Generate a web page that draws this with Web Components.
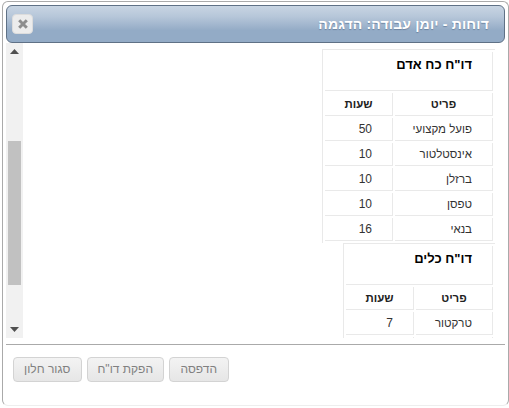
<!DOCTYPE html>
<html lang="he" dir="rtl"><head><meta charset="utf-8"><style>
html,body{margin:0;padding:0;background:#fff;height:408px;overflow:hidden}
body{font-family:"Liberation Sans",Arial,sans-serif;font-size:12px}
</style></head><body>
<app-dialog heading="דוחות - יומן עבודה: הדגמה">
  <report-table heading='דו"ח כח אדם' width="173" col="98" rows='[["פועל מקצועי","50"],["אינסטלטור","10"],["ברזלן","10"],["טפסן","10"],["בנאי","16"]]'></report-table>
  <report-table heading='דו"ח כלים' width="152" col="77" rows='[["טרקטור","7"],["",""]]'></report-table>
  <dlg-button slot="actions" w="59.5">הדפסה</dlg-button>
  <dlg-button slot="actions" w="77.5">הפקת דו"ח</dlg-button>
  <dlg-button slot="actions" w="68.5">סגור חלון</dlg-button>
</app-dialog>
<script>
class AppDialog extends HTMLElement{
  constructor(){super();const h=this.getAttribute('heading');
  this.attachShadow({mode:'open'}).innerHTML=`<style>
  :host{display:block;box-sizing:border-box;width:507px;height:405px;margin:1px 0 0 2px;background:#fff;border:1px solid #aaa;border-bottom-color:#eee;border-radius:6px;padding:3px 3px 0 3px;direction:rtl}
  .bar{box-sizing:border-box;height:38px;display:flex;align-items:center;justify-content:space-between;padding:0 15px 0 5px;border:1px solid #5f7186;border-radius:6px;background:linear-gradient(#c8d5e3 0%,#b6c6d9 30%,#93abc6 68%,#93abc6 100%)}
  h1{margin:0;font:bold 14px "Liberation Sans",Arial,sans-serif;letter-spacing:.17px;color:#fff;text-shadow:0 1px 1px #6d84a0}
  .x{box-sizing:border-box;width:21px;height:20px;border:1px solid #dcdcdc;border-radius:4px;background:#ececec;display:flex;align-items:center;justify-content:center}
  .body{display:flex;direction:ltr;height:295px}
  .sb{box-sizing:border-box;width:17px;flex:none;background:#f1f1f1;display:flex;flex-direction:column;align-items:center;justify-content:space-between;position:relative;padding:6px 0}
  .thumb{position:absolute;left:2px;top:98px;width:13px;height:144px;background:#c1c1c1}
  .content{flex:1;overflow:hidden;direction:rtl;padding:6px 10px 0 0}
  hr{margin:6px 0 0 0;border:0;height:1px;background:#aaa}
  .foot{display:flex;flex-direction:row-reverse;justify-content:flex-end;gap:5px;padding:12px 0 0 7px;direction:ltr}
  </style>
  <div class="bar"><h1>${h}</h1><div class="x"><svg width="12" height="12" viewBox="0 0 12 12"><path d="M2.2 2.2 9.8 9.8M9.8 2.2 2.2 9.8" stroke="#8d8d8d" stroke-width="3"/></svg></div></div>
  <div class="body"><div class="sb"><svg width="9" height="5"><path d="M0 5 4.5 0 9 5z" fill="#505050"/></svg><div class="thumb"></div><svg width="9" height="5"><path d="M0 0 4.5 5 9 0z" fill="#505050"/></svg></div><div class="content"><slot></slot></div></div>
  <hr><div class="foot"><slot name="actions"></slot></div>`;}
}
class ReportTable extends HTMLElement{
  constructor(){super();const w=+this.getAttribute('width'),col=+this.getAttribute('col');
  const rows=JSON.parse(this.getAttribute('rows'));
  this.attachShadow({mode:'open'}).innerHTML=`<style>
  :host{display:block;width:${w}px}
  table{box-sizing:border-box;width:${w}px;table-layout:fixed;border-collapse:separate;border-spacing:2px;border:solid #e9e9e9;border-width:1px 0 0 1px;color:#333;font:11.5px "Liberation Sans",Arial,sans-serif}
  td,th{border:solid #e9e9e9;border-width:0 1px 1px 0;padding:0;height:23px;box-sizing:border-box}
  .cap{height:39px;text-align:right;vertical-align:top;padding:5px 20px 0 0;font-size:13px;color:#000}
  .h{text-align:center;font-size:11.5px;font-weight:bold;color:#222}
  td{text-align:right;padding-right:20px}
  td.n{font-size:12px}
  </style><table><colgroup><col style="width:${col}px"><col></colgroup>
  <tr><th class="cap" colspan="2">${this.getAttribute('heading')}</th></tr>
  <tr><th class="h">פריט</th><th class="h">שעות</th></tr>
  ${rows.map(r=>`<tr><td>${r[0]}</td><td class="n">${r[1]}</td></tr>`).join('')}
  </table>`;}
}
class DlgButton extends HTMLElement{
  constructor(){super();this.attachShadow({mode:'open'}).innerHTML=`<style>
  :host{display:block;box-sizing:border-box;height:25px;width:${this.getAttribute('w')}px;text-align:center;border:1px solid #d3d3d3;border-radius:4px;background:linear-gradient(#f3f3f3,#e6e6e6);color:#808080;font:12px/23px "Liberation Sans",Arial,sans-serif;direction:rtl;white-space:nowrap}
  </style><slot></slot>`;}
}
customElements.define('app-dialog',AppDialog);
customElements.define('report-table',ReportTable);
customElements.define('dlg-button',DlgButton);
</script>
</body></html>
